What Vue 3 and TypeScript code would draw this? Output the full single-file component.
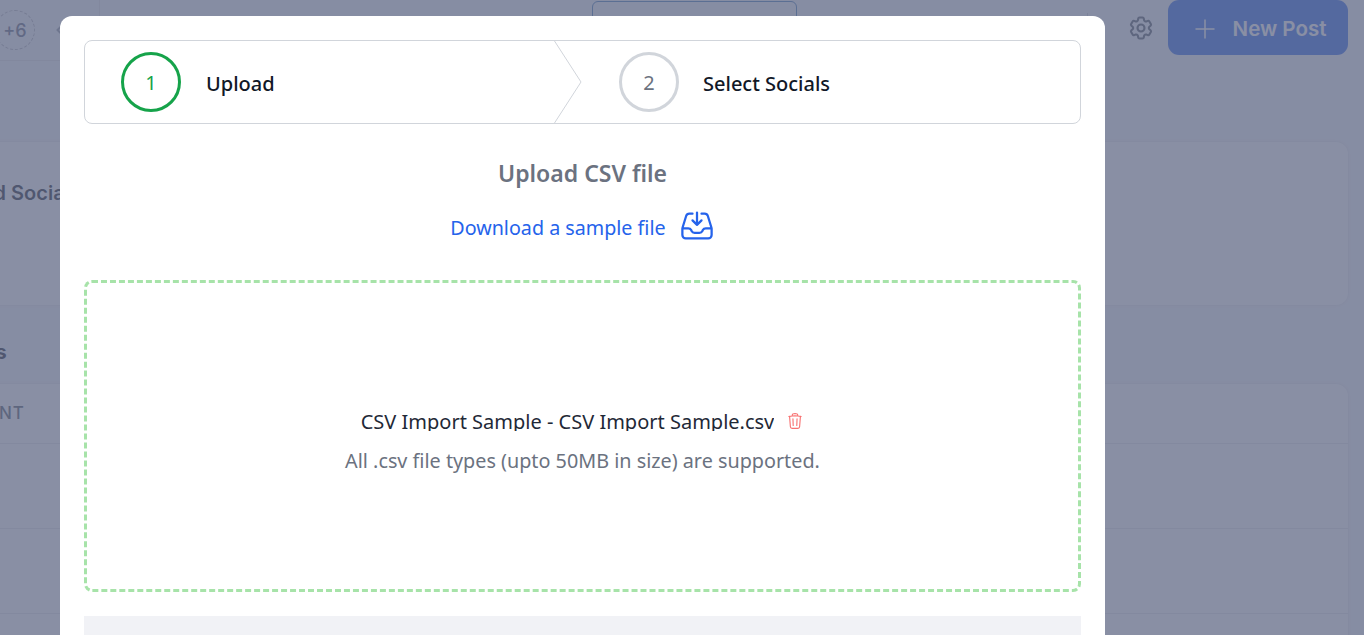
<script setup lang="ts">
interface Step {
  id: number;
  label: string;
  active: boolean;
}

const steps: Step[] = [
  { id: 1, label: 'Upload', active: true },
  { id: 2, label: 'Select Socials', active: false },
];

const tableRows = [1, 2, 3];
</script>

<template>
  <div class="page">
    <!-- dimmed page behind the modal -->
    <header class="topbar">
      <div class="avatars">
        <span class="more">+6</span>
        <span class="diamond"></span>
      </div>
      <div class="search"></div>
      <div class="actions">
        <span class="divider"></span>
        <svg class="gear" viewBox="0 0 24 24" fill="none" stroke="currentColor" stroke-width="1.8">
          <path d="M9.594 3.94c.09-.542.56-.94 1.11-.94h2.593c.55 0 1.02.398 1.11.94l.213 1.281c.063.374.313.686.645.87.074.04.147.083.22.127.325.196.72.257 1.075.124l1.217-.456a1.125 1.125 0 0 1 1.37.49l1.296 2.247a1.125 1.125 0 0 1-.26 1.431l-1.003.827c-.293.241-.438.613-.43.992a7.723 7.723 0 0 1 0 .255c-.008.378.137.75.43.991l1.004.827c.424.35.534.955.26 1.43l-1.298 2.247a1.125 1.125 0 0 1-1.369.491l-1.217-.456c-.355-.133-.75-.072-1.076.124a6.47 6.47 0 0 1-.22.128c-.331.183-.581.495-.644.869l-.213 1.281c-.09.543-.56.94-1.11.94h-2.594c-.55 0-1.019-.398-1.11-.94l-.213-1.281c-.062-.374-.312-.686-.644-.87a6.52 6.52 0 0 1-.22-.127c-.325-.196-.72-.257-1.076-.124l-1.217.456a1.125 1.125 0 0 1-1.369-.49l-1.297-2.247a1.125 1.125 0 0 1 .26-1.431l1.004-.827c.292-.24.437-.613.43-.991a6.932 6.932 0 0 1 0-.255c.007-.38-.138-.751-.43-.992l-1.004-.827a1.125 1.125 0 0 1-.26-1.43l1.297-2.247a1.125 1.125 0 0 1 1.37-.491l1.216.456c.356.133.751.072 1.076-.124.072-.044.146-.086.22-.128.332-.183.582-.495.644-.869l.214-1.28Z" />
          <path d="M15 12a3 3 0 1 1-6 0 3 3 0 0 1 6 0Z" />
        </svg>
        <button class="new-post">
          <svg class="plus" viewBox="0 0 24 24" fill="none" stroke="currentColor" stroke-width="1.5">
            <path d="M12 2.5v19M2.5 12h19" />
          </svg>
          New Post
        </button>
      </div>
    </header>

    <main class="content">
      <section class="social-card">
        <h3>Connected Socials</h3>
      </section>
      <h2 class="section-title">Posts</h2>
      <section class="table-card">
        <div class="table-head">ACCOUNT</div>
        <div v-for="row in tableRows" :key="row" class="table-row"></div>
      </section>
    </main>

    <div class="overlay"></div>

    <div class="modal">
      <div class="stepper">
        <template v-for="(step, index) in steps" :key="step.id">
          <div class="step" :class="{ active: step.active, first: index === 0 }">
            <span class="circle">{{ step.id }}</span>
            <span class="step-label">{{ step.label }}</span>
          </div>
          <svg v-if="index === 0" class="chevron" viewBox="0 0 28 82" preserveAspectRatio="none" fill="none">
            <path d="M0.5 0 L27 41 L0.5 82" stroke="#d1d5db" />
          </svg>
        </template>
      </div>

      <h2 class="upload-title">Upload CSV file</h2>
      <a class="sample-link" href="#">
        Download a sample file
        <svg class="inbox" viewBox="0 0 24 24" fill="none" stroke="currentColor" stroke-width="1.5" stroke-linecap="round" stroke-linejoin="round">
          <path d="M9 3.75H6.912a2.25 2.25 0 0 0-2.15 1.588L2.35 13.177a2.25 2.25 0 0 0-.1.661V18a2.25 2.25 0 0 0 2.25 2.25h15A2.25 2.25 0 0 0 21.75 18v-4.162c0-.224-.034-.447-.1-.661L19.24 5.338a2.25 2.25 0 0 0-2.15-1.588H15M2.25 13.5h3.86a2.25 2.25 0 0 1 2.012 1.244l.256.512a2.25 2.25 0 0 0 2.013 1.244h3.218a2.25 2.25 0 0 0 2.013-1.244l.256-.512a2.25 2.25 0 0 1 2.013-1.244h3.859M12 3v8.25m0 0-3-3m3 3 3-3" />
        </svg>
      </a>

      <div class="dropzone">
        <div class="file-row">
          <span class="file-name">CSV Import Sample - CSV Import Sample.csv</span>
          <svg class="trash" viewBox="0 0 24 24" fill="none" stroke="currentColor" stroke-width="1.5" stroke-linecap="round" stroke-linejoin="round">
            <path d="m14.74 9-.346 9m-4.788 0L9.26 9m9.968-3.21c.342.052.682.107 1.022.166m-1.022-.165L18.16 19.673a2.25 2.25 0 0 1-2.244 2.077H8.084a2.25 2.25 0 0 1-2.244-2.077L4.772 5.79m14.456 0a48.108 48.108 0 0 0-3.478-.397m-12 .562c.34-.059.68-.114 1.022-.165m0 0a48.11 48.11 0 0 1 3.478-.397m7.5 0v-.916c0-1.18-.91-2.164-2.09-2.201a51.964 51.964 0 0 0-3.32 0c-1.18.037-2.09 1.022-2.09 2.201v.916m7.5 0a48.667 48.667 0 0 0-7.5 0" />
          </svg>
        </div>
        <p class="hint">All .csv file types (upto 50MB in size) are supported.</p>
      </div>

      <div class="preview"></div>
    </div>
  </div>
</template>

<style>
html,
body {
  margin: 0;
  height: 100%;
  overflow: hidden;
}
</style>

<style scoped>
.page {
  height: 635px;
  overflow: hidden;
  background: #f3f4f8;
  font-family: Inter, 'Liberation Sans', sans-serif;
  position: relative;
}

.topbar {
  display: flex;
  height: 60px;
}
.avatars {
  width: 100px;
  height: 60px;
  box-sizing: content-box;
  border-right: 1px solid #dfe1e6;
  border-bottom: 1px solid #dfe1e6;
  display: flex;
  align-items: center;
  gap: 24px;
  margin-left: -1px;
}
.more {
  width: 38px;
  height: 38px;
  flex: none;
  margin-left: -4px;
  border: 1px dashed #aeb2bb;
  border-radius: 50%;
  display: flex;
  align-items: center;
  justify-content: center;
  font-size: 18px;
  font-weight: 500;
  color: #59617a;
}
.diamond {
  width: 10px;
  height: 10px;
  flex: none;
  border: 2px solid #8e95a3;
  transform: rotate(45deg);
}
.search {
  width: 203px;
  height: 52px;
  margin: 1px 0 0 492px;
  border: 1px solid #3f7ab8;
  border-radius: 6px;
}
.actions {
  margin-left: auto;
  display: flex;
  align-items: flex-start;
  padding-right: 16px;
}
.divider {
  width: 1px;
  height: 34px;
  margin: 13px 39px 0 0;
  background: #c9ccd3;
}
.gear {
  width: 28px;
  height: 28px;
  margin: 14px 13px 0 0;
  color: #4b5563;
}
.new-post {
  width: 180px;
  height: 55px;
  border: 0;
  border-radius: 11px;
  background: #2563eb;
  color: #fff;
  font-family: Inter, 'Liberation Sans', sans-serif;
  font-size: 20.5px;
  font-weight: 600;
  padding: 2px 0 0 3px;
  display: flex;
  align-items: center;
  justify-content: center;
  gap: 16px;
}
.plus {
  width: 24px;
  height: 24px;
}

.content {
  padding: 81px 16px 0 0;
}
.social-card {
  height: 163px;
  margin: 1px 0 -1px -300px;
  border-radius: 12px;
  background: #fff;
  box-shadow: 0 0 3px rgba(0, 0, 0, 0.1);
}
.social-card h3 {
  margin: 0;
  padding: 39px 0 0 200px;
  font-size: 20px;
  font-weight: 600;
  line-height: 24px;
  color: #111827;
}
.section-title {
  margin: 36px 0 0 -48px;
  height: 44px;
  font-size: 20px;
  font-weight: 700;
  line-height: 24px;
  color: #111827;
}
.table-card {
  margin-left: -300px;
  border-radius: 12px 12px 0 0;
  background: #fff;
  box-shadow: 0 0 3px rgba(0, 0, 0, 0.1);
}
.table-head {
  height: 59px;
  padding-left: 232px;
  line-height: 59px;
  font-size: 17px;
  font-weight: 500;
  letter-spacing: 1px;
  color: #4b5563;
  border-bottom: 1px solid #e5e7eb;
}
.table-row {
  height: 84px;
  border-bottom: 1px solid #e5e7eb;
}

.overlay {
  position: absolute;
  inset: 0;
  background: rgba(100, 108, 135, 0.76);
}

.modal {
  position: absolute;
  left: 60px;
  top: 16px;
  width: 1045px;
  height: 640px;
  box-sizing: border-box;
  padding: 24px;
  background: #fff;
  border-radius: 12px;
  text-align: center;
  font-family: 'Noto Sans', 'Open Sans', sans-serif;
}

.stepper {
  display: flex;
  height: 84px;
  box-sizing: border-box;
  border: 1px solid #d1d5db;
  border-radius: 8px;
}
.step {
  display: flex;
  align-items: center;
  padding-left: 37px;
}
.step.first {
  width: 469px;
  box-sizing: border-box;
  padding-left: 36px;
}
.circle {
  width: 60px;
  height: 60px;
  box-sizing: border-box;
  flex: none;
  border: 3px solid #d1d5db;
  border-radius: 50%;
  display: flex;
  align-items: center;
  justify-content: center;
  font-size: 20px;
  color: #6b7280;
}
.step.active .circle {
  border-color: #16a34a;
  color: #16a34a;
}
.step-label {
  margin-left: 24px;
  padding-top: 2px;
  font-size: 20px;
  font-weight: 500;
  color: #111827;
}
.step.first .step-label {
  margin-left: 25px;
}
.chevron {
  width: 28px;
  height: 82px;
  flex: none;
}

.upload-title {
  margin: 31px 0 0;
  font-size: 23px;
  font-weight: 600;
  line-height: 36px;
  color: #6b7280;
}
.sample-link {
  display: flex;
  align-items: center;
  justify-content: center;
  gap: 13px;
  height: 36px;
  margin-top: 18px;
  font-size: 19.7px;
  color: #2563eb;
  text-decoration: none;
}
.inbox {
  width: 36px;
  height: 36px;
  margin-top: -3px;
}

.dropzone {
  height: 312px;
  box-sizing: border-box;
  margin-top: 35px;
  padding-top: 13px;
  border: 3px dashed #a7e3a9;
  border-radius: 8px;
  display: flex;
  flex-direction: column;
  align-items: center;
  justify-content: center;
}
.file-row {
  display: flex;
  gap: 12px;
  height: 24px;
}
.file-name {
  height: 21px;
  overflow: hidden;
  font-size: 20px;
  line-height: 24px;
  color: #1f2937;
}
.trash {
  width: 18px;
  height: 18px;
  margin-top: 2px;
  color: #f87171;
}
.hint {
  margin: 13px 0 0;
  font-size: 19.8px;
  line-height: 28px;
  color: #6b7280;
}
.preview {
  height: 40px;
  margin-top: 24px;
  background: #f1f2f6;
}
</style>
